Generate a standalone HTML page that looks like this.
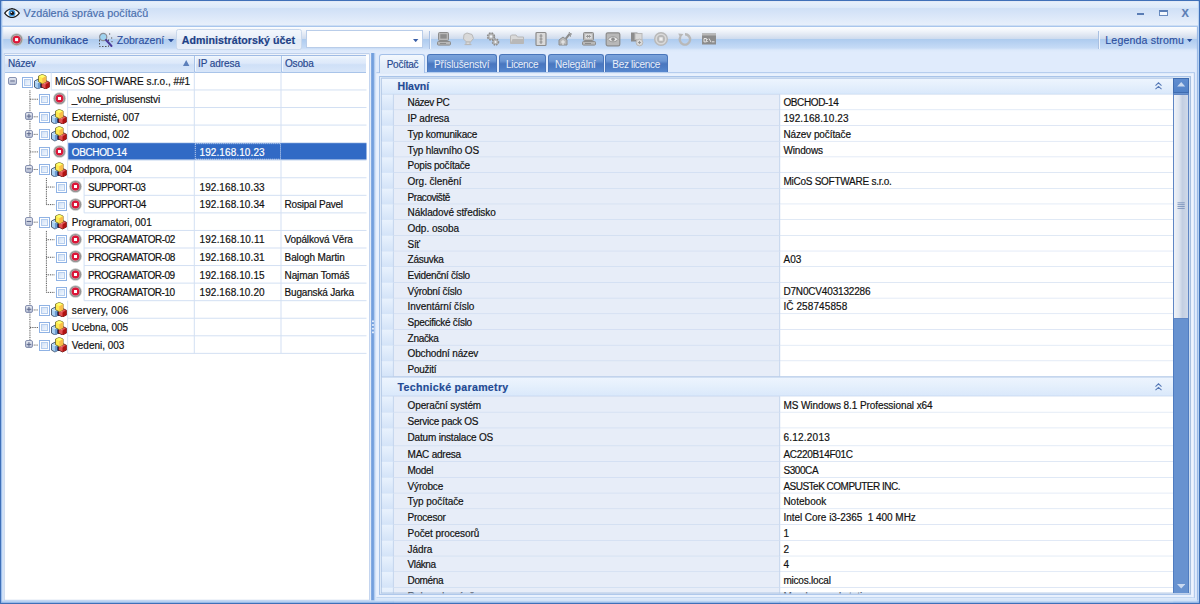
<!DOCTYPE html>
<html lang="cs"><head><meta charset="utf-8"><title>Vzdálená správa počítačů</title>
<style>
html,body{margin:0;padding:0;}
body{width:1200px;height:604px;overflow:hidden;position:relative;background:#e0ebfc;font-family:"Liberation Sans", sans-serif;}
div{position:absolute;}
.t{white-space:pre;-webkit-text-stroke:0.18px currentColor;}
</style></head><body>
<div style="left:0px;top:0px;width:1200px;height:27px;background:linear-gradient(#f4f8fd 0px,#f4f8fd 1.8px,#e5effb 2.4px,#dce9f9 7.5px,#cfe0f6 8.2px,#d6e4f8 13px,#e8f0fb 25.2px,#a9c6ec 25.9px,#a9c6ec 26.8px,#fcfdfe 27px);"></div>
<div style="left:2px;top:27px;width:1196px;height:25.5px;background:linear-gradient(#fcfdfe 0px,#f0f4fa 4px,#e0e7f2 8px,#cedbee 11.8px,#adcbee 12px,#b5d0f1 15px,#c6dbf6 21px,#dbe8fa 23px,#e0ebfc 25.5px);"></div>
<div style="left:2px;top:52.5px;width:1196px;height:549px;background:#e0ebfc;"></div>
<svg style="position:absolute;left:3.8px;top:7.6px" width="16" height="10.4" viewBox="0 0 16 10.4"><path d="M0.7 5.2 C3.4 1.4 6 0.9 8 0.9 C10 0.9 12.6 1.4 15.3 5.2 C12.6 9 10 9.5 8 9.5 C6 9.5 3.4 9 0.7 5.2Z" fill="#fff" stroke="#1c1c1c" stroke-width="1.2"/><circle cx="8" cy="5.2" r="3.4" fill="#3d96dc"/><circle cx="8.2" cy="5.2" r="1.9" fill="#1a1210"/><circle cx="7.4" cy="4.4" r="0.7" fill="#ddd"/><path d="M8 0 v1 M8 9.4 v1" stroke="#1c1c1c" stroke-width="1.4"/></svg>
<div class="t" style="left:23.5px;top:6.00px;height:14px;line-height:14px;font-size:10.8px;font-weight:400;color:#4a6fae;letter-spacing:0.019px;">Vzdálená správa počítačů</div>
<div style="left:1137px;top:13px;width:7px;height:1.6px;background:#5a7db5;"></div>
<div style="left:1159px;top:9.6px;width:8.6px;height:6.4px;border:1px solid #6a8cc0;border-top:2.4px solid #5a7db5;box-sizing:border-box;background:#f4f8fd;"></div>
<div class="t" style="left:1181.6px;top:5.90px;height:14px;line-height:14px;font-size:11px;font-weight:700;color:#5a7db5;letter-spacing:2.056px;">X</div>
<svg style="position:absolute;left:9.8px;top:33.0px" width="13.2" height="13.2" viewBox="0 0 26 26"><circle cx="13" cy="13" r="12.7" fill="#c4c4c4"/><circle cx="13" cy="13" r="11.2" fill="#8e8e8e"/><circle cx="13" cy="13" r="9.4" fill="#b9b4b4"/><circle cx="13" cy="13" r="7.8" fill="#dc1638"/><rect x="10" y="10" width="6" height="6" fill="#fff"/></svg>
<div class="t" style="left:27.5px;top:33.20px;height:14px;line-height:14px;font-size:10.6px;font-weight:400;color:#26499a;letter-spacing:0.250px;-webkit-text-stroke:0.22px #26499a;">Komunikace</div>
<svg style="position:absolute;left:98px;top:32px" width="16" height="16" viewBox="0 0 16 16"><rect x="1.5" y="7.5" width="9" height="7" fill="none" stroke="#555" stroke-width="1" stroke-dasharray="1.5 1.5"/><circle cx="5.2" cy="5" r="3.6" fill="#9fd3f0" stroke="#8a8f98" stroke-width="1.2"/><path d="M8 8 L13.5 14" stroke="#4a3a9a" stroke-width="2" stroke-linecap="round"/><path d="M11 2 h2 M13 6 h1.6 M14 9 v2" stroke="#555" stroke-width="1" stroke-dasharray="1.2 1.2"/></svg>
<div class="t" style="left:116.7px;top:33.20px;height:14px;line-height:14px;font-size:10.6px;font-weight:400;color:#2b4d9c;letter-spacing:-0.023px;-webkit-text-stroke:0.1px #2b4d9c;">Zobrazení</div>
<svg style="position:absolute;left:168.2px;top:38.6px" width="6" height="3.4" viewBox="0 0 6 3.4"><path d="M0 0h6L3 3.4z" fill="#2a4f9c"/></svg>
<div style="left:176.4px;top:28.6px;width:125.2px;height:21.6px;background:linear-gradient(#f3f7fc,#e9f0f9 45%,#e1eaf6 50%,#e8eff9);border:1px solid #c9d8ec;border-radius:2.5px;box-sizing:border-box;"></div>
<div class="t" style="left:181.7px;top:33.20px;height:14px;line-height:14px;font-size:10.6px;font-weight:700;color:#203f86;letter-spacing:0.069px;">Administrátorský účet</div>
<div style="left:306px;top:30px;width:116.6px;height:18.4px;background:#fff;border:1px solid #b9cde9;box-sizing:border-box;"></div>
<svg style="position:absolute;left:413.2px;top:38.8px" width="5.4" height="3.2" viewBox="0 0 6 3.4"><path d="M0 0h6L3 3.4z" fill="#3a5fa8"/></svg>
<div style="left:429px;top:30.5px;width:1px;height:18px;background:#a9c0e2;"></div>
<div style="left:430px;top:30.5px;width:1px;height:18px;background:#eef4fc;"></div>
<svg style="position:absolute;left:436px;top:30.9px" width="16" height="16" viewBox="0 0 16 16"><rect x="2.5" y="1.5" width="10" height="8" rx="1" fill="#b8b8b8" stroke="#8c8c8c"/><rect x="4.3" y="3.2" width="6.4" height="4.4" fill="#8c8c8c"/><rect x="1.5" y="10.5" width="13" height="3.6" rx="1" fill="#b8b8b8" stroke="#8c8c8c"/><rect x="4" y="12" width="6" height="1" fill="#8c8c8c"/></svg><svg style="position:absolute;left:460px;top:30.9px" width="16" height="16" viewBox="0 0 16 16"><path d="M4 3.5 l3 -1.5 l5 1.5 l1.5 4 l-3 3.5 h-4 l-3 -3z" fill="#d9d9d9" stroke="#b8b8b8"/><path d="M6 11 h4 v2.5 h-4z M4.5 13.6 h7" fill="#d9d9d9" stroke="#b8b8b8"/></svg><svg style="position:absolute;left:484.5px;top:30.9px" width="16" height="16" viewBox="0 0 16 16"><circle cx="6" cy="5.5" r="3.4" fill="#b8b8b8" stroke="#8c8c8c" stroke-dasharray="1.6 1.1" stroke-width="1.6"/><circle cx="6" cy="5.5" r="1.2" fill="#eef3fa"/><circle cx="10.5" cy="11" r="3" fill="#b8b8b8" stroke="#8c8c8c" stroke-dasharray="1.5 1" stroke-width="1.5"/><circle cx="10.5" cy="11" r="1" fill="#eef3fa"/></svg><svg style="position:absolute;left:508.70000000000005px;top:30.9px" width="16" height="16" viewBox="0 0 16 16"><path d="M1.5 5 v7.5 h13 v-6.5 h-6 l-1.5 -2 h-4.5z" fill="#d9d9d9" stroke="#b8b8b8"/><path d="M3.5 8 h11 v4.5 h-13z" fill="#b8b8b8"/></svg><svg style="position:absolute;left:533px;top:30.9px" width="16" height="16" viewBox="0 0 16 16"><rect x="3" y="1.5" width="10" height="13" rx="1" fill="#d9d9d9" stroke="#8c8c8c" stroke-width="1.2"/><path d="M8 3 v10 M6.5 5 h3 M6.5 8 h3 M6.5 11 h3" stroke="#8c8c8c" stroke-width="1"/></svg><svg style="position:absolute;left:556.5px;top:30.9px" width="16" height="16" viewBox="0 0 16 16"><path d="M2 14 v-5 l4 -3 l4 3 v5z" fill="#b8b8b8" stroke="#8c8c8c"/><path d="M4 11 h4 M6 9 v5" stroke="#eee" stroke-width="1"/><path d="M8 7 l4 -5 l1.5 1.5 l-4 5z" fill="#8c8c8c"/><path d="M12 1 l1 1.6 l1.6 0.4 l-1.4 1 l0.2 1.8" stroke="#8c8c8c" fill="none"/></svg><svg style="position:absolute;left:580.5px;top:30.9px" width="16" height="16" viewBox="0 0 16 16"><rect x="2.5" y="1.5" width="10" height="8" rx="1" fill="#b8b8b8" stroke="#8c8c8c"/><rect x="4.3" y="3.2" width="6.4" height="4.4" fill="#e4e4e4"/><path d="M5 5.4 h5 M6 4.2 l3 2.4 M9 4.2 l-3 2.4" stroke="#8c8c8c" stroke-width="0.9"/><rect x="1.5" y="10.5" width="13" height="3.6" rx="1" fill="#b8b8b8" stroke="#8c8c8c"/><rect x="4" y="12" width="6" height="1" fill="#8c8c8c"/></svg><svg style="position:absolute;left:604.5px;top:30.9px" width="16" height="16" viewBox="0 0 16 16"><rect x="1.2" y="1.8" width="13.6" height="13" rx="1.6" fill="#b8b8b8" stroke="#8c8c8c" stroke-width="1.2"/><path d="M3 8.3 C5 5 11 5 13 8.3 C11 11.6 5 11.6 3 8.3Z" fill="#e8e8e8" stroke="#8c8c8c" stroke-width="0.8"/><circle cx="8" cy="8.3" r="1.8" fill="#8c8c8c"/></svg><svg style="position:absolute;left:628.7px;top:30.9px" width="16" height="16" viewBox="0 0 16 16"><rect x="2" y="1.5" width="6.5" height="9" fill="#8c8c8c"/><rect x="6" y="2.5" width="7" height="6" fill="#d9d9d9" stroke="#b8b8b8"/><circle cx="10.5" cy="11.5" r="3.4" fill="#d9d9d9" stroke="#b8b8b8"/><path d="M9 11.5 h3 M10.5 10 v3" stroke="#8c8c8c" stroke-width="0.8"/></svg><svg style="position:absolute;left:653px;top:30.9px" width="16" height="16" viewBox="0 0 16 16"><circle cx="8" cy="8" r="6.3" fill="#d9d9d9" stroke="#b8b8b8" stroke-width="1.4"/><circle cx="8" cy="8" r="4" fill="#b8b8b8"/><rect x="6.3" y="6.3" width="3.4" height="3.4" fill="#f0f0f0"/></svg><svg style="position:absolute;left:677px;top:30.9px" width="16" height="16" viewBox="0 0 16 16"><path d="M8 3.2 A5.2 5.2 0 1 1 3.4 5.8" fill="none" stroke="#b8b8b8" stroke-width="2.4"/><path d="M1.2 2.4 l5.2 0.6 l-3 4z" fill="#b8b8b8"/></svg><svg style="position:absolute;left:700.7px;top:30.9px" width="16" height="16" viewBox="0 0 16 16"><rect x="1" y="2.5" width="14" height="11" fill="#8c8c8c"/><rect x="1" y="2.5" width="14" height="2" fill="#b8b8b8"/><path d="M3 7.5 h2.4 v3.4 h-2.4z M6.6 8 v0.8 M6.6 10 v0.8 M8 7.5 l2 3.6 M11 10.8 h2.5" stroke="#eee" stroke-width="0.9" fill="none"/></svg>
<div style="left:1098px;top:31px;width:1px;height:17.5px;background:#a9c0e2;"></div>
<div style="left:1099px;top:31px;width:1px;height:17.5px;background:#eef4fc;"></div>
<div class="t" style="left:1105.3px;top:33.20px;height:14px;line-height:14px;font-size:10.6px;font-weight:400;color:#2b4d9c;letter-spacing:0.153px;-webkit-text-stroke:0.1px #2b4d9c;">Legenda stromu</div>
<svg style="position:absolute;left:1187.4px;top:38.8px" width="5.4" height="3.2" viewBox="0 0 6 3.4"><path d="M0 0h6L3 3.4z" fill="#2a4f9c"/></svg>
<svg style="position:absolute;left:0;top:0" width="1200" height="604" viewBox="0 0 1200 604"><rect x="3.80" y="53.30" width="366.00" height="547.30" fill="#b1c6e6"/><rect x="4.60" y="54.20" width="364.40" height="545.60" fill="#ffffff"/></svg>
<div style="left:5px;top:55px;width:361.4px;height:17.5px;background:linear-gradient(#f2f7fd 0%,#e4eefb 20%,#dde9fa 45%,#cfe0f7 55%,#d8e6f9 100%);border-bottom:1px solid #a9c4e9;border-top:1px solid #9fbbe4;box-sizing:border-box;"></div>
<div style="left:193.8px;top:55.5px;width:1px;height:16.900000000000006px;background:#a9c4e9;"></div>
<div style="left:194.8px;top:55.5px;width:1px;height:15.900000000000006px;background:#f3f8fe;"></div>
<div style="left:280.5px;top:55.5px;width:1px;height:16.900000000000006px;background:#a9c4e9;"></div>
<div style="left:281.5px;top:55.5px;width:1px;height:15.900000000000006px;background:#f3f8fe;"></div>
<div class="t" style="left:8px;top:56.60px;height:14px;line-height:14px;font-size:10px;font-weight:400;color:#27488f;letter-spacing:-0.172px;">Název</div>
<div class="t" style="left:198px;top:56.60px;height:14px;line-height:14px;font-size:10px;font-weight:400;color:#27488f;letter-spacing:-0.069px;">IP adresa</div>
<div class="t" style="left:285px;top:56.60px;height:14px;line-height:14px;font-size:10px;font-weight:400;color:#27488f;letter-spacing:-0.194px;">Osoba</div>
<svg style="position:absolute;left:183.4px;top:60.4px" width="6.4" height="6" viewBox="0 0 6.4 6"><path d="M0 6h6.4L3.2 0z" fill="#5c7fba"/></svg>
<svg style="position:absolute;left:0;top:0" width="1200" height="604" viewBox="0 0 1200 604"><rect x="51.20" y="89.46" width="315.30" height="1.00" fill="#d3e0f3"/><rect x="50.70" y="72.40" width="1.00" height="17.56" fill="#d3e0f3"/><rect x="193.80" y="72.40" width="1.00" height="17.56" fill="#d3e0f3"/><rect x="280.50" y="72.40" width="1.00" height="17.56" fill="#d3e0f3"/><rect x="67.65" y="107.02" width="298.85" height="1.00" fill="#d3e0f3"/><rect x="67.15" y="89.96" width="1.00" height="17.56" fill="#d3e0f3"/><rect x="193.80" y="89.96" width="1.00" height="17.56" fill="#d3e0f3"/><rect x="280.50" y="89.96" width="1.00" height="17.56" fill="#d3e0f3"/><rect x="67.65" y="124.58" width="298.85" height="1.00" fill="#d3e0f3"/><rect x="67.15" y="107.52" width="1.00" height="17.56" fill="#d3e0f3"/><rect x="193.80" y="107.52" width="1.00" height="17.56" fill="#d3e0f3"/><rect x="280.50" y="107.52" width="1.00" height="17.56" fill="#d3e0f3"/><rect x="67.65" y="142.14" width="298.85" height="1.00" fill="#d3e0f3"/><rect x="67.15" y="125.08" width="1.00" height="17.56" fill="#d3e0f3"/><rect x="193.80" y="125.08" width="1.00" height="17.56" fill="#d3e0f3"/><rect x="280.50" y="125.08" width="1.00" height="17.56" fill="#d3e0f3"/><rect x="68.15" y="143.14" width="298.35" height="16.56" fill="#316ac5"/><rect x="67.65" y="159.70" width="298.85" height="1.00" fill="#d3e0f3"/><rect x="67.15" y="142.64" width="1.00" height="17.56" fill="#d3e0f3"/><rect x="67.65" y="177.26" width="298.85" height="1.00" fill="#d3e0f3"/><rect x="67.15" y="160.20" width="1.00" height="17.56" fill="#d3e0f3"/><rect x="193.80" y="160.20" width="1.00" height="17.56" fill="#d3e0f3"/><rect x="280.50" y="160.20" width="1.00" height="17.56" fill="#d3e0f3"/><rect x="84.10" y="194.82" width="282.40" height="1.00" fill="#d3e0f3"/><rect x="83.60" y="177.76" width="1.00" height="17.56" fill="#d3e0f3"/><rect x="193.80" y="177.76" width="1.00" height="17.56" fill="#d3e0f3"/><rect x="280.50" y="177.76" width="1.00" height="17.56" fill="#d3e0f3"/><rect x="84.10" y="212.38" width="282.40" height="1.00" fill="#d3e0f3"/><rect x="83.60" y="195.32" width="1.00" height="17.56" fill="#d3e0f3"/><rect x="193.80" y="195.32" width="1.00" height="17.56" fill="#d3e0f3"/><rect x="280.50" y="195.32" width="1.00" height="17.56" fill="#d3e0f3"/><rect x="67.65" y="229.94" width="298.85" height="1.00" fill="#d3e0f3"/><rect x="67.15" y="212.88" width="1.00" height="17.56" fill="#d3e0f3"/><rect x="193.80" y="212.88" width="1.00" height="17.56" fill="#d3e0f3"/><rect x="280.50" y="212.88" width="1.00" height="17.56" fill="#d3e0f3"/><rect x="84.10" y="247.50" width="282.40" height="1.00" fill="#d3e0f3"/><rect x="83.60" y="230.44" width="1.00" height="17.56" fill="#d3e0f3"/><rect x="193.80" y="230.44" width="1.00" height="17.56" fill="#d3e0f3"/><rect x="280.50" y="230.44" width="1.00" height="17.56" fill="#d3e0f3"/><rect x="84.10" y="265.06" width="282.40" height="1.00" fill="#d3e0f3"/><rect x="83.60" y="248.00" width="1.00" height="17.56" fill="#d3e0f3"/><rect x="193.80" y="248.00" width="1.00" height="17.56" fill="#d3e0f3"/><rect x="280.50" y="248.00" width="1.00" height="17.56" fill="#d3e0f3"/><rect x="84.10" y="282.62" width="282.40" height="1.00" fill="#d3e0f3"/><rect x="83.60" y="265.56" width="1.00" height="17.56" fill="#d3e0f3"/><rect x="193.80" y="265.56" width="1.00" height="17.56" fill="#d3e0f3"/><rect x="280.50" y="265.56" width="1.00" height="17.56" fill="#d3e0f3"/><rect x="84.10" y="300.18" width="282.40" height="1.00" fill="#d3e0f3"/><rect x="83.60" y="283.12" width="1.00" height="17.56" fill="#d3e0f3"/><rect x="193.80" y="283.12" width="1.00" height="17.56" fill="#d3e0f3"/><rect x="280.50" y="283.12" width="1.00" height="17.56" fill="#d3e0f3"/><rect x="67.65" y="317.74" width="298.85" height="1.00" fill="#d3e0f3"/><rect x="67.15" y="300.68" width="1.00" height="17.56" fill="#d3e0f3"/><rect x="193.80" y="300.68" width="1.00" height="17.56" fill="#d3e0f3"/><rect x="280.50" y="300.68" width="1.00" height="17.56" fill="#d3e0f3"/><rect x="67.65" y="335.30" width="298.85" height="1.00" fill="#d3e0f3"/><rect x="67.15" y="318.24" width="1.00" height="17.56" fill="#d3e0f3"/><rect x="193.80" y="318.24" width="1.00" height="17.56" fill="#d3e0f3"/><rect x="280.50" y="318.24" width="1.00" height="17.56" fill="#d3e0f3"/><rect x="67.65" y="352.86" width="298.85" height="1.00" fill="#d3e0f3"/><rect x="67.15" y="335.80" width="1.00" height="17.56" fill="#d3e0f3"/><rect x="193.80" y="335.80" width="1.00" height="17.56" fill="#d3e0f3"/><rect x="280.50" y="335.80" width="1.00" height="17.56" fill="#d3e0f3"/><line x1="29.95" y1="90.46" x2="29.95" y2="340.58" stroke="#444" stroke-width="1" stroke-dasharray="0.9 0.9"/><line x1="46.40" y1="178.26" x2="46.40" y2="204.60" stroke="#444" stroke-width="1" stroke-dasharray="0.9 0.9"/><line x1="46.40" y1="230.94" x2="46.40" y2="292.40" stroke="#444" stroke-width="1" stroke-dasharray="0.9 0.9"/><line x1="29.95" y1="99.24" x2="37.95" y2="99.24" stroke="#444" stroke-width="1" stroke-dasharray="0.9 0.9"/><line x1="33.75" y1="116.80" x2="37.95" y2="116.80" stroke="#444" stroke-width="1" stroke-dasharray="0.9 0.9"/><line x1="33.75" y1="134.36" x2="37.95" y2="134.36" stroke="#444" stroke-width="1" stroke-dasharray="0.9 0.9"/><line x1="29.95" y1="151.92" x2="37.95" y2="151.92" stroke="#444" stroke-width="1" stroke-dasharray="0.9 0.9"/><line x1="33.75" y1="169.48" x2="37.95" y2="169.48" stroke="#444" stroke-width="1" stroke-dasharray="0.9 0.9"/><line x1="46.40" y1="187.04" x2="54.40" y2="187.04" stroke="#444" stroke-width="1" stroke-dasharray="0.9 0.9"/><line x1="46.40" y1="204.60" x2="54.40" y2="204.60" stroke="#444" stroke-width="1" stroke-dasharray="0.9 0.9"/><line x1="33.75" y1="222.16" x2="37.95" y2="222.16" stroke="#444" stroke-width="1" stroke-dasharray="0.9 0.9"/><line x1="46.40" y1="239.72" x2="54.40" y2="239.72" stroke="#444" stroke-width="1" stroke-dasharray="0.9 0.9"/><line x1="46.40" y1="257.28" x2="54.40" y2="257.28" stroke="#444" stroke-width="1" stroke-dasharray="0.9 0.9"/><line x1="46.40" y1="274.84" x2="54.40" y2="274.84" stroke="#444" stroke-width="1" stroke-dasharray="0.9 0.9"/><line x1="46.40" y1="292.40" x2="54.40" y2="292.40" stroke="#444" stroke-width="1" stroke-dasharray="0.9 0.9"/><line x1="33.75" y1="309.96" x2="37.95" y2="309.96" stroke="#444" stroke-width="1" stroke-dasharray="0.9 0.9"/><line x1="29.95" y1="327.52" x2="37.95" y2="327.52" stroke="#444" stroke-width="1" stroke-dasharray="0.9 0.9"/><line x1="33.75" y1="345.08" x2="37.95" y2="345.08" stroke="#444" stroke-width="1" stroke-dasharray="0.9 0.9"/></svg>
<div class="t" style="left:55.0px;top:75.38px;height:14px;line-height:14px;font-size:10px;font-weight:400;color:#111;letter-spacing:-0.030px;">MiCoS SOFTWARE s.r.o., ##1</div>
<div style="left:22.2px;top:76.58000000000001px;width:11px;height:11px;border:1px solid #8fb2e4;background:#fff;box-sizing:border-box;"></div>
<div style="left:24.2px;top:78.58000000000001px;width:7px;height:7px;border:1px solid #b4cdef;background:linear-gradient(135deg,#d3e2f6,#f2f7fd);box-sizing:border-box;"></div>
<svg style="position:absolute;left:34.0px;top:73.80000000000001px" width="16" height="15.4" viewBox="0 0 16 15.4">
<path d="M3.9 5.3 L7.5 7 V13.1 L3.9 15 L0.5 13.1 V7Z" fill="#a9d0f1" stroke="#2c3c58" stroke-width="0.8" stroke-linejoin="round"/><path d="M3.9 9 L7.5 7 V13.1 L3.9 15Z" fill="#6d9ccf"/><path d="M0.9 7.2 L3.9 8.8 L7.1 7.2" fill="none" stroke="#e4f1fc" stroke-width="0.7"/>
<path d="M6.3 9.5 L8.6 9.5 L8.6 13.4 L7.4 14 L6.3 13.2Z" fill="#161b42"/>
<path d="M11.5 6.4 L15.4 8.2 V13.1 L11.5 15 L7.6 13.1 V8.2Z" fill="#e15252" stroke="#5c1414" stroke-width="0.8" stroke-linejoin="round"/><path d="M11.5 10.2 L15.4 8.2 V13.1 L11.5 15Z" fill="#b01212"/><path d="M8 8.5 L11.5 10.1" fill="none" stroke="#f59a9a" stroke-width="0.7"/>
<path d="M8.3 0.4 L12.1 2.1 V7.7 L8.3 9.7 L4.5 7.7 V2.1Z" fill="#ffe94e" stroke="#6a6420" stroke-width="0.8" stroke-linejoin="round"/><path d="M8.3 4 L12.1 2.1 V7.7 L8.3 9.7Z" fill="#f9bd48"/><path d="M8.3 0.8 L11.7 2.2 L8.3 3.9 L4.9 2.2Z" fill="#ffff6a"/>
</svg>
<div style="left:8.3px;top:76.88000000000001px;width:8.4px;height:8.2px;border:1px solid #8791b0;border-radius:2px;background:linear-gradient(#e6e9f1,#b4bcd2);box-sizing:border-box;"></div>
<svg style="position:absolute;left:0;top:0" width="1200" height="604" viewBox="0 0 1200 604"><rect x="10.20" y="80.48" width="4.60" height="1.00" fill="#5d688c"/></svg>
<div class="t" style="left:71.75px;top:92.94px;height:14px;line-height:14px;font-size:10px;font-weight:400;color:#111;letter-spacing:-0.088px;">_volne_prislusenstvi</div>
<div style="left:39.05px;top:94.14000000000001px;width:11px;height:11px;border:1px solid #8fb2e4;background:#fff;box-sizing:border-box;"></div>
<div style="left:41.05px;top:96.14000000000001px;width:7px;height:7px;border:1px solid #b4cdef;background:linear-gradient(135deg,#d3e2f6,#f2f7fd);box-sizing:border-box;"></div>
<svg style="position:absolute;left:52.6px;top:92.24000000000001px" width="13" height="13" viewBox="0 0 26 26"><circle cx="13" cy="13" r="12.7" fill="#c4c4c4"/><circle cx="13" cy="13" r="11.2" fill="#8e8e8e"/><circle cx="13" cy="13" r="9.4" fill="#b9b4b4"/><circle cx="13" cy="13" r="7.8" fill="#dc1638"/><rect x="10" y="10" width="6" height="6" fill="#fff"/></svg>
<div class="t" style="left:71.75px;top:110.50px;height:14px;line-height:14px;font-size:10px;font-weight:400;color:#111;letter-spacing:0.085px;">Externisté, 007</div>
<div style="left:39.05px;top:111.70000000000002px;width:11px;height:11px;border:1px solid #8fb2e4;background:#fff;box-sizing:border-box;"></div>
<div style="left:41.05px;top:113.70000000000002px;width:7px;height:7px;border:1px solid #b4cdef;background:linear-gradient(135deg,#d3e2f6,#f2f7fd);box-sizing:border-box;"></div>
<svg style="position:absolute;left:50.75px;top:108.92000000000002px" width="16" height="15.4" viewBox="0 0 16 15.4">
<path d="M3.9 5.3 L7.5 7 V13.1 L3.9 15 L0.5 13.1 V7Z" fill="#a9d0f1" stroke="#2c3c58" stroke-width="0.8" stroke-linejoin="round"/><path d="M3.9 9 L7.5 7 V13.1 L3.9 15Z" fill="#6d9ccf"/><path d="M0.9 7.2 L3.9 8.8 L7.1 7.2" fill="none" stroke="#e4f1fc" stroke-width="0.7"/>
<path d="M6.3 9.5 L8.6 9.5 L8.6 13.4 L7.4 14 L6.3 13.2Z" fill="#161b42"/>
<path d="M11.5 6.4 L15.4 8.2 V13.1 L11.5 15 L7.6 13.1 V8.2Z" fill="#e15252" stroke="#5c1414" stroke-width="0.8" stroke-linejoin="round"/><path d="M11.5 10.2 L15.4 8.2 V13.1 L11.5 15Z" fill="#b01212"/><path d="M8 8.5 L11.5 10.1" fill="none" stroke="#f59a9a" stroke-width="0.7"/>
<path d="M8.3 0.4 L12.1 2.1 V7.7 L8.3 9.7 L4.5 7.7 V2.1Z" fill="#ffe94e" stroke="#6a6420" stroke-width="0.8" stroke-linejoin="round"/><path d="M8.3 4 L12.1 2.1 V7.7 L8.3 9.7Z" fill="#f9bd48"/><path d="M8.3 0.8 L11.7 2.2 L8.3 3.9 L4.9 2.2Z" fill="#ffff6a"/>
</svg>
<div style="left:24.75px;top:112.00000000000001px;width:8.4px;height:8.2px;border:1px solid #8791b0;border-radius:2px;background:linear-gradient(#e6e9f1,#b4bcd2);box-sizing:border-box;"></div>
<svg style="position:absolute;left:0;top:0" width="1200" height="604" viewBox="0 0 1200 604"><rect x="26.65" y="115.60" width="4.60" height="1.00" fill="#5d688c"/><rect x="28.45" y="113.80" width="1.00" height="4.60" fill="#5d688c"/></svg>
<div class="t" style="left:71.75px;top:128.06px;height:14px;line-height:14px;font-size:10px;font-weight:400;color:#111;letter-spacing:0.021px;">Obchod, 002</div>
<div style="left:39.05px;top:129.26px;width:11px;height:11px;border:1px solid #8fb2e4;background:#fff;box-sizing:border-box;"></div>
<div style="left:41.05px;top:131.26px;width:7px;height:7px;border:1px solid #b4cdef;background:linear-gradient(135deg,#d3e2f6,#f2f7fd);box-sizing:border-box;"></div>
<svg style="position:absolute;left:50.75px;top:126.48px" width="16" height="15.4" viewBox="0 0 16 15.4">
<path d="M3.9 5.3 L7.5 7 V13.1 L3.9 15 L0.5 13.1 V7Z" fill="#a9d0f1" stroke="#2c3c58" stroke-width="0.8" stroke-linejoin="round"/><path d="M3.9 9 L7.5 7 V13.1 L3.9 15Z" fill="#6d9ccf"/><path d="M0.9 7.2 L3.9 8.8 L7.1 7.2" fill="none" stroke="#e4f1fc" stroke-width="0.7"/>
<path d="M6.3 9.5 L8.6 9.5 L8.6 13.4 L7.4 14 L6.3 13.2Z" fill="#161b42"/>
<path d="M11.5 6.4 L15.4 8.2 V13.1 L11.5 15 L7.6 13.1 V8.2Z" fill="#e15252" stroke="#5c1414" stroke-width="0.8" stroke-linejoin="round"/><path d="M11.5 10.2 L15.4 8.2 V13.1 L11.5 15Z" fill="#b01212"/><path d="M8 8.5 L11.5 10.1" fill="none" stroke="#f59a9a" stroke-width="0.7"/>
<path d="M8.3 0.4 L12.1 2.1 V7.7 L8.3 9.7 L4.5 7.7 V2.1Z" fill="#ffe94e" stroke="#6a6420" stroke-width="0.8" stroke-linejoin="round"/><path d="M8.3 4 L12.1 2.1 V7.7 L8.3 9.7Z" fill="#f9bd48"/><path d="M8.3 0.8 L11.7 2.2 L8.3 3.9 L4.9 2.2Z" fill="#ffff6a"/>
</svg>
<div style="left:24.75px;top:129.56px;width:8.4px;height:8.2px;border:1px solid #8791b0;border-radius:2px;background:linear-gradient(#e6e9f1,#b4bcd2);box-sizing:border-box;"></div>
<svg style="position:absolute;left:0;top:0" width="1200" height="604" viewBox="0 0 1200 604"><rect x="26.65" y="133.16" width="4.60" height="1.00" fill="#5d688c"/><rect x="28.45" y="131.36" width="1.00" height="4.60" fill="#5d688c"/><rect x="195.30" y="143.64" width="85.20" height="15.56" fill="none" stroke="#e8eefa" stroke-width="0.9" stroke-dasharray="1 1"/></svg>
<div class="t" style="left:71.75px;top:145.62px;height:14px;line-height:14px;font-size:10px;font-weight:400;color:#fff;letter-spacing:-0.373px;">OBCHOD-14</div>
<div class="t" style="left:199.5px;top:145.62px;height:14px;line-height:14px;font-size:10px;font-weight:400;color:#fff;letter-spacing:0.096px;">192.168.10.23</div>
<div style="left:39.05px;top:146.82px;width:11px;height:11px;border:1px solid #8fb2e4;background:#fff;box-sizing:border-box;"></div>
<div style="left:41.05px;top:148.82px;width:7px;height:7px;border:1px solid #b4cdef;background:linear-gradient(135deg,#d3e2f6,#f2f7fd);box-sizing:border-box;"></div>
<svg style="position:absolute;left:52.6px;top:144.92px" width="13" height="13" viewBox="0 0 26 26"><circle cx="13" cy="13" r="12.7" fill="#c4c4c4"/><circle cx="13" cy="13" r="11.2" fill="#8e8e8e"/><circle cx="13" cy="13" r="9.4" fill="#b9b4b4"/><circle cx="13" cy="13" r="7.8" fill="#dc1638"/><rect x="10" y="10" width="6" height="6" fill="#fff"/></svg>
<div class="t" style="left:71.75px;top:163.18px;height:14px;line-height:14px;font-size:10px;font-weight:400;color:#111;letter-spacing:-0.005px;">Podpora, 004</div>
<div style="left:39.05px;top:164.38px;width:11px;height:11px;border:1px solid #8fb2e4;background:#fff;box-sizing:border-box;"></div>
<div style="left:41.05px;top:166.38px;width:7px;height:7px;border:1px solid #b4cdef;background:linear-gradient(135deg,#d3e2f6,#f2f7fd);box-sizing:border-box;"></div>
<svg style="position:absolute;left:50.75px;top:161.6px" width="16" height="15.4" viewBox="0 0 16 15.4">
<path d="M3.9 5.3 L7.5 7 V13.1 L3.9 15 L0.5 13.1 V7Z" fill="#a9d0f1" stroke="#2c3c58" stroke-width="0.8" stroke-linejoin="round"/><path d="M3.9 9 L7.5 7 V13.1 L3.9 15Z" fill="#6d9ccf"/><path d="M0.9 7.2 L3.9 8.8 L7.1 7.2" fill="none" stroke="#e4f1fc" stroke-width="0.7"/>
<path d="M6.3 9.5 L8.6 9.5 L8.6 13.4 L7.4 14 L6.3 13.2Z" fill="#161b42"/>
<path d="M11.5 6.4 L15.4 8.2 V13.1 L11.5 15 L7.6 13.1 V8.2Z" fill="#e15252" stroke="#5c1414" stroke-width="0.8" stroke-linejoin="round"/><path d="M11.5 10.2 L15.4 8.2 V13.1 L11.5 15Z" fill="#b01212"/><path d="M8 8.5 L11.5 10.1" fill="none" stroke="#f59a9a" stroke-width="0.7"/>
<path d="M8.3 0.4 L12.1 2.1 V7.7 L8.3 9.7 L4.5 7.7 V2.1Z" fill="#ffe94e" stroke="#6a6420" stroke-width="0.8" stroke-linejoin="round"/><path d="M8.3 4 L12.1 2.1 V7.7 L8.3 9.7Z" fill="#f9bd48"/><path d="M8.3 0.8 L11.7 2.2 L8.3 3.9 L4.9 2.2Z" fill="#ffff6a"/>
</svg>
<div style="left:24.75px;top:164.68px;width:8.4px;height:8.2px;border:1px solid #8791b0;border-radius:2px;background:linear-gradient(#e6e9f1,#b4bcd2);box-sizing:border-box;"></div>
<svg style="position:absolute;left:0;top:0" width="1200" height="604" viewBox="0 0 1200 604"><rect x="26.65" y="168.28" width="4.60" height="1.00" fill="#5d688c"/></svg>
<div class="t" style="left:88.0px;top:180.74px;height:14px;line-height:14px;font-size:10px;font-weight:400;color:#111;letter-spacing:-0.476px;">SUPPORT-03</div>
<div class="t" style="left:199.5px;top:180.74px;height:14px;line-height:14px;font-size:10px;font-weight:400;color:#111;letter-spacing:0.096px;">192.168.10.33</div>
<div style="left:55.5px;top:181.94px;width:11px;height:11px;border:1px solid #8fb2e4;background:#fff;box-sizing:border-box;"></div>
<div style="left:57.5px;top:183.94px;width:7px;height:7px;border:1px solid #b4cdef;background:linear-gradient(135deg,#d3e2f6,#f2f7fd);box-sizing:border-box;"></div>
<svg style="position:absolute;left:69.05px;top:180.04px" width="13" height="13" viewBox="0 0 26 26"><circle cx="13" cy="13" r="12.7" fill="#c4c4c4"/><circle cx="13" cy="13" r="11.2" fill="#8e8e8e"/><circle cx="13" cy="13" r="9.4" fill="#b9b4b4"/><circle cx="13" cy="13" r="7.8" fill="#dc1638"/><rect x="10" y="10" width="6" height="6" fill="#fff"/></svg>
<div class="t" style="left:88.0px;top:198.30px;height:14px;line-height:14px;font-size:10px;font-weight:400;color:#111;letter-spacing:-0.426px;">SUPPORT-04</div>
<div class="t" style="left:199.5px;top:198.30px;height:14px;line-height:14px;font-size:10px;font-weight:400;color:#111;letter-spacing:0.096px;">192.168.10.34</div>
<div class="t" style="left:284.6px;top:198.30px;height:14px;line-height:14px;font-size:10px;font-weight:400;color:#111;letter-spacing:-0.220px;">Rosipal Pavel</div>
<div style="left:55.5px;top:199.5px;width:11px;height:11px;border:1px solid #8fb2e4;background:#fff;box-sizing:border-box;"></div>
<div style="left:57.5px;top:201.5px;width:7px;height:7px;border:1px solid #b4cdef;background:linear-gradient(135deg,#d3e2f6,#f2f7fd);box-sizing:border-box;"></div>
<svg style="position:absolute;left:69.05px;top:197.6px" width="13" height="13" viewBox="0 0 26 26"><circle cx="13" cy="13" r="12.7" fill="#c4c4c4"/><circle cx="13" cy="13" r="11.2" fill="#8e8e8e"/><circle cx="13" cy="13" r="9.4" fill="#b9b4b4"/><circle cx="13" cy="13" r="7.8" fill="#dc1638"/><rect x="10" y="10" width="6" height="6" fill="#fff"/></svg>
<div class="t" style="left:71.75px;top:215.86px;height:14px;line-height:14px;font-size:10px;font-weight:400;color:#111;letter-spacing:-0.003px;">Programatori, 001</div>
<div style="left:39.05px;top:217.06px;width:11px;height:11px;border:1px solid #8fb2e4;background:#fff;box-sizing:border-box;"></div>
<div style="left:41.05px;top:219.06px;width:7px;height:7px;border:1px solid #b4cdef;background:linear-gradient(135deg,#d3e2f6,#f2f7fd);box-sizing:border-box;"></div>
<svg style="position:absolute;left:50.75px;top:214.28px" width="16" height="15.4" viewBox="0 0 16 15.4">
<path d="M3.9 5.3 L7.5 7 V13.1 L3.9 15 L0.5 13.1 V7Z" fill="#a9d0f1" stroke="#2c3c58" stroke-width="0.8" stroke-linejoin="round"/><path d="M3.9 9 L7.5 7 V13.1 L3.9 15Z" fill="#6d9ccf"/><path d="M0.9 7.2 L3.9 8.8 L7.1 7.2" fill="none" stroke="#e4f1fc" stroke-width="0.7"/>
<path d="M6.3 9.5 L8.6 9.5 L8.6 13.4 L7.4 14 L6.3 13.2Z" fill="#161b42"/>
<path d="M11.5 6.4 L15.4 8.2 V13.1 L11.5 15 L7.6 13.1 V8.2Z" fill="#e15252" stroke="#5c1414" stroke-width="0.8" stroke-linejoin="round"/><path d="M11.5 10.2 L15.4 8.2 V13.1 L11.5 15Z" fill="#b01212"/><path d="M8 8.5 L11.5 10.1" fill="none" stroke="#f59a9a" stroke-width="0.7"/>
<path d="M8.3 0.4 L12.1 2.1 V7.7 L8.3 9.7 L4.5 7.7 V2.1Z" fill="#ffe94e" stroke="#6a6420" stroke-width="0.8" stroke-linejoin="round"/><path d="M8.3 4 L12.1 2.1 V7.7 L8.3 9.7Z" fill="#f9bd48"/><path d="M8.3 0.8 L11.7 2.2 L8.3 3.9 L4.9 2.2Z" fill="#ffff6a"/>
</svg>
<div style="left:24.75px;top:217.36px;width:8.4px;height:8.2px;border:1px solid #8791b0;border-radius:2px;background:linear-gradient(#e6e9f1,#b4bcd2);box-sizing:border-box;"></div>
<svg style="position:absolute;left:0;top:0" width="1200" height="604" viewBox="0 0 1200 604"><rect x="26.65" y="220.96" width="4.60" height="1.00" fill="#5d688c"/></svg>
<div class="t" style="left:88.0px;top:233.42px;height:14px;line-height:14px;font-size:10px;font-weight:400;color:#111;letter-spacing:-0.427px;">PROGRAMATOR-02</div>
<div class="t" style="left:199.5px;top:233.42px;height:14px;line-height:14px;font-size:10px;font-weight:400;color:#111;letter-spacing:0.152px;">192.168.10.11</div>
<div class="t" style="left:284.6px;top:233.42px;height:14px;line-height:14px;font-size:10px;font-weight:400;color:#111;letter-spacing:-0.133px;">Vopálková Věra</div>
<div style="left:55.5px;top:234.62px;width:11px;height:11px;border:1px solid #8fb2e4;background:#fff;box-sizing:border-box;"></div>
<div style="left:57.5px;top:236.62px;width:7px;height:7px;border:1px solid #b4cdef;background:linear-gradient(135deg,#d3e2f6,#f2f7fd);box-sizing:border-box;"></div>
<svg style="position:absolute;left:69.05px;top:232.72px" width="13" height="13" viewBox="0 0 26 26"><circle cx="13" cy="13" r="12.7" fill="#c4c4c4"/><circle cx="13" cy="13" r="11.2" fill="#8e8e8e"/><circle cx="13" cy="13" r="9.4" fill="#b9b4b4"/><circle cx="13" cy="13" r="7.8" fill="#dc1638"/><rect x="10" y="10" width="6" height="6" fill="#fff"/></svg>
<div class="t" style="left:88.0px;top:250.98px;height:14px;line-height:14px;font-size:10px;font-weight:400;color:#111;letter-spacing:-0.427px;">PROGRAMATOR-08</div>
<div class="t" style="left:199.5px;top:250.98px;height:14px;line-height:14px;font-size:10px;font-weight:400;color:#111;letter-spacing:0.096px;">192.168.10.31</div>
<div class="t" style="left:284.6px;top:250.98px;height:14px;line-height:14px;font-size:10px;font-weight:400;color:#111;letter-spacing:-0.131px;">Balogh Martin</div>
<div style="left:55.5px;top:252.17999999999998px;width:11px;height:11px;border:1px solid #8fb2e4;background:#fff;box-sizing:border-box;"></div>
<div style="left:57.5px;top:254.17999999999998px;width:7px;height:7px;border:1px solid #b4cdef;background:linear-gradient(135deg,#d3e2f6,#f2f7fd);box-sizing:border-box;"></div>
<svg style="position:absolute;left:69.05px;top:250.27999999999997px" width="13" height="13" viewBox="0 0 26 26"><circle cx="13" cy="13" r="12.7" fill="#c4c4c4"/><circle cx="13" cy="13" r="11.2" fill="#8e8e8e"/><circle cx="13" cy="13" r="9.4" fill="#b9b4b4"/><circle cx="13" cy="13" r="7.8" fill="#dc1638"/><rect x="10" y="10" width="6" height="6" fill="#fff"/></svg>
<div class="t" style="left:88.0px;top:268.54px;height:14px;line-height:14px;font-size:10px;font-weight:400;color:#111;letter-spacing:-0.449px;">PROGRAMATOR-09</div>
<div class="t" style="left:199.5px;top:268.54px;height:14px;line-height:14px;font-size:10px;font-weight:400;color:#111;letter-spacing:0.096px;">192.168.10.15</div>
<div class="t" style="left:284.6px;top:268.54px;height:14px;line-height:14px;font-size:10px;font-weight:400;color:#111;letter-spacing:-0.135px;">Najman Tomáš</div>
<div style="left:55.5px;top:269.74px;width:11px;height:11px;border:1px solid #8fb2e4;background:#fff;box-sizing:border-box;"></div>
<div style="left:57.5px;top:271.74px;width:7px;height:7px;border:1px solid #b4cdef;background:linear-gradient(135deg,#d3e2f6,#f2f7fd);box-sizing:border-box;"></div>
<svg style="position:absolute;left:69.05px;top:267.84000000000003px" width="13" height="13" viewBox="0 0 26 26"><circle cx="13" cy="13" r="12.7" fill="#c4c4c4"/><circle cx="13" cy="13" r="11.2" fill="#8e8e8e"/><circle cx="13" cy="13" r="9.4" fill="#b9b4b4"/><circle cx="13" cy="13" r="7.8" fill="#dc1638"/><rect x="10" y="10" width="6" height="6" fill="#fff"/></svg>
<div class="t" style="left:88.0px;top:286.10px;height:14px;line-height:14px;font-size:10px;font-weight:400;color:#111;letter-spacing:-0.449px;">PROGRAMATOR-10</div>
<div class="t" style="left:199.5px;top:286.10px;height:14px;line-height:14px;font-size:10px;font-weight:400;color:#111;letter-spacing:0.096px;">192.168.10.20</div>
<div class="t" style="left:284.6px;top:286.10px;height:14px;line-height:14px;font-size:10px;font-weight:400;color:#111;letter-spacing:-0.180px;">Buganská Jarka</div>
<div style="left:55.5px;top:287.29999999999995px;width:11px;height:11px;border:1px solid #8fb2e4;background:#fff;box-sizing:border-box;"></div>
<div style="left:57.5px;top:289.29999999999995px;width:7px;height:7px;border:1px solid #b4cdef;background:linear-gradient(135deg,#d3e2f6,#f2f7fd);box-sizing:border-box;"></div>
<svg style="position:absolute;left:69.05px;top:285.4px" width="13" height="13" viewBox="0 0 26 26"><circle cx="13" cy="13" r="12.7" fill="#c4c4c4"/><circle cx="13" cy="13" r="11.2" fill="#8e8e8e"/><circle cx="13" cy="13" r="9.4" fill="#b9b4b4"/><circle cx="13" cy="13" r="7.8" fill="#dc1638"/><rect x="10" y="10" width="6" height="6" fill="#fff"/></svg>
<div class="t" style="left:71.75px;top:303.66px;height:14px;line-height:14px;font-size:10px;font-weight:400;color:#111;letter-spacing:0.225px;">servery, 006</div>
<div style="left:39.05px;top:304.8599999999999px;width:11px;height:11px;border:1px solid #8fb2e4;background:#fff;box-sizing:border-box;"></div>
<div style="left:41.05px;top:306.8599999999999px;width:7px;height:7px;border:1px solid #b4cdef;background:linear-gradient(135deg,#d3e2f6,#f2f7fd);box-sizing:border-box;"></div>
<svg style="position:absolute;left:50.75px;top:302.0799999999999px" width="16" height="15.4" viewBox="0 0 16 15.4">
<path d="M3.9 5.3 L7.5 7 V13.1 L3.9 15 L0.5 13.1 V7Z" fill="#a9d0f1" stroke="#2c3c58" stroke-width="0.8" stroke-linejoin="round"/><path d="M3.9 9 L7.5 7 V13.1 L3.9 15Z" fill="#6d9ccf"/><path d="M0.9 7.2 L3.9 8.8 L7.1 7.2" fill="none" stroke="#e4f1fc" stroke-width="0.7"/>
<path d="M6.3 9.5 L8.6 9.5 L8.6 13.4 L7.4 14 L6.3 13.2Z" fill="#161b42"/>
<path d="M11.5 6.4 L15.4 8.2 V13.1 L11.5 15 L7.6 13.1 V8.2Z" fill="#e15252" stroke="#5c1414" stroke-width="0.8" stroke-linejoin="round"/><path d="M11.5 10.2 L15.4 8.2 V13.1 L11.5 15Z" fill="#b01212"/><path d="M8 8.5 L11.5 10.1" fill="none" stroke="#f59a9a" stroke-width="0.7"/>
<path d="M8.3 0.4 L12.1 2.1 V7.7 L8.3 9.7 L4.5 7.7 V2.1Z" fill="#ffe94e" stroke="#6a6420" stroke-width="0.8" stroke-linejoin="round"/><path d="M8.3 4 L12.1 2.1 V7.7 L8.3 9.7Z" fill="#f9bd48"/><path d="M8.3 0.8 L11.7 2.2 L8.3 3.9 L4.9 2.2Z" fill="#ffff6a"/>
</svg>
<div style="left:24.75px;top:305.1599999999999px;width:8.4px;height:8.2px;border:1px solid #8791b0;border-radius:2px;background:linear-gradient(#e6e9f1,#b4bcd2);box-sizing:border-box;"></div>
<svg style="position:absolute;left:0;top:0" width="1200" height="604" viewBox="0 0 1200 604"><rect x="26.65" y="308.76" width="4.60" height="1.00" fill="#5d688c"/><rect x="28.45" y="306.96" width="1.00" height="4.60" fill="#5d688c"/></svg>
<div class="t" style="left:71.75px;top:321.22px;height:14px;line-height:14px;font-size:10px;font-weight:400;color:#111;letter-spacing:-0.038px;">Ucebna, 005</div>
<div style="left:39.05px;top:322.41999999999996px;width:11px;height:11px;border:1px solid #8fb2e4;background:#fff;box-sizing:border-box;"></div>
<div style="left:41.05px;top:324.41999999999996px;width:7px;height:7px;border:1px solid #b4cdef;background:linear-gradient(135deg,#d3e2f6,#f2f7fd);box-sizing:border-box;"></div>
<svg style="position:absolute;left:50.75px;top:319.64px" width="16" height="15.4" viewBox="0 0 16 15.4">
<path d="M3.9 5.3 L7.5 7 V13.1 L3.9 15 L0.5 13.1 V7Z" fill="#a9d0f1" stroke="#2c3c58" stroke-width="0.8" stroke-linejoin="round"/><path d="M3.9 9 L7.5 7 V13.1 L3.9 15Z" fill="#6d9ccf"/><path d="M0.9 7.2 L3.9 8.8 L7.1 7.2" fill="none" stroke="#e4f1fc" stroke-width="0.7"/>
<path d="M6.3 9.5 L8.6 9.5 L8.6 13.4 L7.4 14 L6.3 13.2Z" fill="#161b42"/>
<path d="M11.5 6.4 L15.4 8.2 V13.1 L11.5 15 L7.6 13.1 V8.2Z" fill="#e15252" stroke="#5c1414" stroke-width="0.8" stroke-linejoin="round"/><path d="M11.5 10.2 L15.4 8.2 V13.1 L11.5 15Z" fill="#b01212"/><path d="M8 8.5 L11.5 10.1" fill="none" stroke="#f59a9a" stroke-width="0.7"/>
<path d="M8.3 0.4 L12.1 2.1 V7.7 L8.3 9.7 L4.5 7.7 V2.1Z" fill="#ffe94e" stroke="#6a6420" stroke-width="0.8" stroke-linejoin="round"/><path d="M8.3 4 L12.1 2.1 V7.7 L8.3 9.7Z" fill="#f9bd48"/><path d="M8.3 0.8 L11.7 2.2 L8.3 3.9 L4.9 2.2Z" fill="#ffff6a"/>
</svg>
<div class="t" style="left:71.75px;top:338.78px;height:14px;line-height:14px;font-size:10px;font-weight:400;color:#111;letter-spacing:-0.030px;">Vedeni, 003</div>
<div style="left:39.05px;top:339.9799999999999px;width:11px;height:11px;border:1px solid #8fb2e4;background:#fff;box-sizing:border-box;"></div>
<div style="left:41.05px;top:341.9799999999999px;width:7px;height:7px;border:1px solid #b4cdef;background:linear-gradient(135deg,#d3e2f6,#f2f7fd);box-sizing:border-box;"></div>
<svg style="position:absolute;left:50.75px;top:337.19999999999993px" width="16" height="15.4" viewBox="0 0 16 15.4">
<path d="M3.9 5.3 L7.5 7 V13.1 L3.9 15 L0.5 13.1 V7Z" fill="#a9d0f1" stroke="#2c3c58" stroke-width="0.8" stroke-linejoin="round"/><path d="M3.9 9 L7.5 7 V13.1 L3.9 15Z" fill="#6d9ccf"/><path d="M0.9 7.2 L3.9 8.8 L7.1 7.2" fill="none" stroke="#e4f1fc" stroke-width="0.7"/>
<path d="M6.3 9.5 L8.6 9.5 L8.6 13.4 L7.4 14 L6.3 13.2Z" fill="#161b42"/>
<path d="M11.5 6.4 L15.4 8.2 V13.1 L11.5 15 L7.6 13.1 V8.2Z" fill="#e15252" stroke="#5c1414" stroke-width="0.8" stroke-linejoin="round"/><path d="M11.5 10.2 L15.4 8.2 V13.1 L11.5 15Z" fill="#b01212"/><path d="M8 8.5 L11.5 10.1" fill="none" stroke="#f59a9a" stroke-width="0.7"/>
<path d="M8.3 0.4 L12.1 2.1 V7.7 L8.3 9.7 L4.5 7.7 V2.1Z" fill="#ffe94e" stroke="#6a6420" stroke-width="0.8" stroke-linejoin="round"/><path d="M8.3 4 L12.1 2.1 V7.7 L8.3 9.7Z" fill="#f9bd48"/><path d="M8.3 0.8 L11.7 2.2 L8.3 3.9 L4.9 2.2Z" fill="#ffff6a"/>
</svg>
<div style="left:24.75px;top:340.2799999999999px;width:8.4px;height:8.2px;border:1px solid #8791b0;border-radius:2px;background:linear-gradient(#e6e9f1,#b4bcd2);box-sizing:border-box;"></div>
<svg style="position:absolute;left:0;top:0" width="1200" height="604" viewBox="0 0 1200 604"><rect x="26.65" y="343.88" width="4.60" height="1.00" fill="#5d688c"/><rect x="28.45" y="342.08" width="1.00" height="4.60" fill="#5d688c"/><rect x="369.80" y="53.00" width="1.10" height="547.00" fill="#eef4fc"/><defs><linearGradient id="spl" x1="0" y1="0" x2="1" y2="0"><stop offset="0" stop-color="#8db1e6"/><stop offset="0.5" stop-color="#6e9cdb"/><stop offset="1" stop-color="#8fb3e6"/></linearGradient></defs><rect x="370.9" y="53" width="3.8" height="547.7" fill="url(#spl)"/><rect x="374.70" y="53.00" width="1.30" height="547.00" fill="#d3e3f8"/><rect x="372.00" y="320.50" width="1.90" height="1.70" fill="#e6eefb"/><rect x="372.00" y="324.17" width="1.90" height="1.70" fill="#e6eefb"/><rect x="372.00" y="327.84" width="1.90" height="1.70" fill="#e6eefb"/><rect x="372.00" y="331.51" width="1.90" height="1.70" fill="#e6eefb"/><rect x="376.40" y="72.30" width="818.40" height="1.00" fill="#a4c0e8"/></svg>
<div style="left:378.6px;top:54px;width:46.69999999999999px;height:19px;background:linear-gradient(#f4f8fd,#e3edfa 60%,#dfeaf9);border:1px solid #a4c0e8;border-bottom:none;border-radius:3px 3px 0 0;box-sizing:border-box;"></div>
<div class="t" style="left:386.7px;top:57.50px;height:14px;line-height:14px;font-size:10px;font-weight:400;color:#27488f;letter-spacing:-0.251px;">Počítač</div>
<div style="left:427px;top:54.4px;width:70px;height:17.8px;background:linear-gradient(#7ba3db 0%,#6b96d4 35%,#4976bf 52%,#4d7dc6 75%,#5989cf 100%);border:1px solid #4a76ba;border-bottom:none;border-radius:3px 3px 0 0;box-sizing:border-box;"></div>
<div class="t" style="left:434px;top:57.50px;height:14px;line-height:14px;font-size:10px;font-weight:400;color:#eaf0fa;letter-spacing:-0.150px;-webkit-text-stroke:0;">Příslušenství</div>
<div style="left:499px;top:54.4px;width:47.200000000000045px;height:17.8px;background:linear-gradient(#7ba3db 0%,#6b96d4 35%,#4976bf 52%,#4d7dc6 75%,#5989cf 100%);border:1px solid #4a76ba;border-bottom:none;border-radius:3px 3px 0 0;box-sizing:border-box;"></div>
<div class="t" style="left:506px;top:57.50px;height:14px;line-height:14px;font-size:10px;font-weight:400;color:#eaf0fa;letter-spacing:-0.310px;-webkit-text-stroke:0;">Licence</div>
<div style="left:548px;top:54.4px;width:55.5px;height:17.8px;background:linear-gradient(#7ba3db 0%,#6b96d4 35%,#4976bf 52%,#4d7dc6 75%,#5989cf 100%);border:1px solid #4a76ba;border-bottom:none;border-radius:3px 3px 0 0;box-sizing:border-box;"></div>
<div class="t" style="left:555px;top:57.50px;height:14px;line-height:14px;font-size:10px;font-weight:400;color:#eaf0fa;letter-spacing:-0.174px;-webkit-text-stroke:0;">Nelegální</div>
<div style="left:605px;top:54.4px;width:63px;height:17.8px;background:linear-gradient(#7ba3db 0%,#6b96d4 35%,#4976bf 52%,#4d7dc6 75%,#5989cf 100%);border:1px solid #4a76ba;border-bottom:none;border-radius:3px 3px 0 0;box-sizing:border-box;"></div>
<div class="t" style="left:612.3px;top:57.50px;height:14px;line-height:14px;font-size:10px;font-weight:400;color:#eaf0fa;letter-spacing:-0.313px;-webkit-text-stroke:0;">Bez licence</div>
<svg style="position:absolute;left:0;top:0" width="1200" height="604" viewBox="0 0 1200 604"><rect x="376.40" y="73.30" width="817.40" height="524.00" fill="#e9f1fd"/><rect x="379.00" y="76.00" width="811.80" height="518.80" fill="#a9c4e9"/><rect x="380.00" y="77.00" width="809.80" height="516.80" fill="#e4eefb"/><rect x="380.90" y="77.80" width="808.00" height="515.40" fill="#a9c0e0"/><rect x="381.70" y="78.50" width="1.00" height="1.00" fill="#a9c0e0"/><defs><linearGradient id="ind" x1="0" y1="0" x2="0" y2="1"><stop offset="0" stop-color="#e9f2fd"/><stop offset="1" stop-color="#d3e3f8"/></linearGradient><linearGradient id="cat" x1="0" y1="0" x2="0" y2="1"><stop offset="0" stop-color="#eef5fe"/><stop offset="0.5" stop-color="#e4effc"/><stop offset="1" stop-color="#d9e8fb"/></linearGradient></defs><rect x="381.70" y="78.20" width="791.50" height="16.20" fill="url(#cat)"/><rect x="381.70" y="77.70" width="791.50" height="1.00" fill="#b4c9e8"/><rect x="381.70" y="93.90" width="791.50" height="1.00" fill="#b4c9e8"/></svg>
<div class="t" style="left:397.6px;top:78.70px;height:14px;line-height:14px;font-size:10.6px;font-weight:700;color:#1f4a94;letter-spacing:-0.033px;">Hlavní</div>
<svg style="position:absolute;left:1155.1px;top:82.30000000000001px" width="7" height="8" viewBox="0 0 7 8"><path d="M0.5 3.6 L3.5 0.8 L6.5 3.6 M0.5 7.2 L3.5 4.4 L6.5 7.2" fill="none" stroke="#5578b6" stroke-width="1.05"/></svg>
<svg style="position:absolute;left:0;top:0" width="1200" height="604" viewBox="0 0 1200 604"><rect x="381.70" y="94.40" width="11.70" height="15.99" fill="url(#ind)"/><rect x="393.40" y="94.40" width="386.30" height="15.99" fill="#e7edf8"/><rect x="779.70" y="94.40" width="393.50" height="15.99" fill="#ffffff"/><rect x="393.40" y="109.59" width="779.80" height="1.00" fill="#c6d6ee"/><rect x="392.90" y="94.40" width="1.00" height="15.69" fill="#c6d6ee"/><rect x="779.20" y="94.40" width="1.00" height="15.69" fill="#c6d6ee"/></svg>
<div class="t" style="left:407.6px;top:96.44px;height:14px;line-height:14px;font-size:10px;font-weight:400;color:#111;letter-spacing:-0.427px;">Název PC</div>
<div class="t" style="left:783.4px;top:96.44px;height:14px;line-height:14px;font-size:10px;font-weight:400;color:#111;letter-spacing:-0.373px;">OBCHOD-14</div>
<svg style="position:absolute;left:0;top:0" width="1200" height="604" viewBox="0 0 1200 604"><rect x="381.70" y="110.09" width="11.70" height="15.99" fill="url(#ind)"/><rect x="393.40" y="110.09" width="386.30" height="15.99" fill="#e7edf8"/><rect x="779.70" y="110.09" width="393.50" height="15.99" fill="#ffffff"/><rect x="393.40" y="125.28" width="779.80" height="1.00" fill="#c6d6ee"/><rect x="392.90" y="110.09" width="1.00" height="15.69" fill="#c6d6ee"/><rect x="779.20" y="110.09" width="1.00" height="15.69" fill="#c6d6ee"/></svg>
<div class="t" style="left:407.6px;top:112.13px;height:14px;line-height:14px;font-size:10px;font-weight:400;color:#111;letter-spacing:-0.114px;">IP adresa</div>
<div class="t" style="left:783.4px;top:112.13px;height:14px;line-height:14px;font-size:10px;font-weight:400;color:#111;letter-spacing:0.096px;">192.168.10.23</div>
<svg style="position:absolute;left:0;top:0" width="1200" height="604" viewBox="0 0 1200 604"><rect x="381.70" y="125.78" width="11.70" height="15.99" fill="url(#ind)"/><rect x="393.40" y="125.78" width="386.30" height="15.99" fill="#e7edf8"/><rect x="779.70" y="125.78" width="393.50" height="15.99" fill="#ffffff"/><rect x="393.40" y="140.97" width="779.80" height="1.00" fill="#c6d6ee"/><rect x="392.90" y="125.78" width="1.00" height="15.69" fill="#c6d6ee"/><rect x="779.20" y="125.78" width="1.00" height="15.69" fill="#c6d6ee"/></svg>
<div class="t" style="left:407.6px;top:127.82px;height:14px;line-height:14px;font-size:10px;font-weight:400;color:#111;letter-spacing:-0.190px;">Typ komunikace</div>
<div class="t" style="left:783.4px;top:127.82px;height:14px;line-height:14px;font-size:10px;font-weight:400;color:#111;letter-spacing:-0.103px;">Název počítače</div>
<svg style="position:absolute;left:0;top:0" width="1200" height="604" viewBox="0 0 1200 604"><rect x="381.70" y="141.47" width="11.70" height="15.99" fill="url(#ind)"/><rect x="393.40" y="141.47" width="386.30" height="15.99" fill="#e7edf8"/><rect x="779.70" y="141.47" width="393.50" height="15.99" fill="#ffffff"/><rect x="393.40" y="156.66" width="779.80" height="1.00" fill="#c6d6ee"/><rect x="392.90" y="141.47" width="1.00" height="15.69" fill="#c6d6ee"/><rect x="779.20" y="141.47" width="1.00" height="15.69" fill="#c6d6ee"/></svg>
<div class="t" style="left:407.6px;top:143.51px;height:14px;line-height:14px;font-size:10px;font-weight:400;color:#111;letter-spacing:-0.176px;">Typ hlavního OS</div>
<div class="t" style="left:783.4px;top:143.51px;height:14px;line-height:14px;font-size:10px;font-weight:400;color:#111;letter-spacing:-0.140px;">Windows</div>
<svg style="position:absolute;left:0;top:0" width="1200" height="604" viewBox="0 0 1200 604"><rect x="381.70" y="157.16" width="11.70" height="15.99" fill="url(#ind)"/><rect x="393.40" y="157.16" width="386.30" height="15.99" fill="#e7edf8"/><rect x="779.70" y="157.16" width="393.50" height="15.99" fill="#ffffff"/><rect x="393.40" y="172.34" width="779.80" height="1.00" fill="#c6d6ee"/><rect x="392.90" y="157.16" width="1.00" height="15.69" fill="#c6d6ee"/><rect x="779.20" y="157.16" width="1.00" height="15.69" fill="#c6d6ee"/></svg>
<div class="t" style="left:407.6px;top:159.20px;height:14px;line-height:14px;font-size:10px;font-weight:400;color:#111;letter-spacing:-0.236px;">Popis počítače</div>
<svg style="position:absolute;left:0;top:0" width="1200" height="604" viewBox="0 0 1200 604"><rect x="381.70" y="172.84" width="11.70" height="15.99" fill="url(#ind)"/><rect x="393.40" y="172.84" width="386.30" height="15.99" fill="#e7edf8"/><rect x="779.70" y="172.84" width="393.50" height="15.99" fill="#ffffff"/><rect x="393.40" y="188.03" width="779.80" height="1.00" fill="#c6d6ee"/><rect x="392.90" y="172.84" width="1.00" height="15.69" fill="#c6d6ee"/><rect x="779.20" y="172.84" width="1.00" height="15.69" fill="#c6d6ee"/></svg>
<div class="t" style="left:407.6px;top:174.89px;height:14px;line-height:14px;font-size:10px;font-weight:400;color:#111;letter-spacing:-0.040px;">Org. členění</div>
<div class="t" style="left:783.4px;top:174.89px;height:14px;line-height:14px;font-size:10px;font-weight:400;color:#111;letter-spacing:-0.254px;">MiCoS SOFTWARE s.r.o.</div>
<svg style="position:absolute;left:0;top:0" width="1200" height="604" viewBox="0 0 1200 604"><rect x="381.70" y="188.53" width="11.70" height="15.99" fill="url(#ind)"/><rect x="393.40" y="188.53" width="386.30" height="15.99" fill="#e7edf8"/><rect x="779.70" y="188.53" width="393.50" height="15.99" fill="#ffffff"/><rect x="393.40" y="203.72" width="779.80" height="1.00" fill="#c6d6ee"/><rect x="392.90" y="188.53" width="1.00" height="15.69" fill="#c6d6ee"/><rect x="779.20" y="188.53" width="1.00" height="15.69" fill="#c6d6ee"/></svg>
<div class="t" style="left:407.6px;top:190.58px;height:14px;line-height:14px;font-size:10px;font-weight:400;color:#111;letter-spacing:-0.439px;">Pracoviště</div>
<svg style="position:absolute;left:0;top:0" width="1200" height="604" viewBox="0 0 1200 604"><rect x="381.70" y="204.22" width="11.70" height="15.99" fill="url(#ind)"/><rect x="393.40" y="204.22" width="386.30" height="15.99" fill="#e7edf8"/><rect x="779.70" y="204.22" width="393.50" height="15.99" fill="#ffffff"/><rect x="393.40" y="219.41" width="779.80" height="1.00" fill="#c6d6ee"/><rect x="392.90" y="204.22" width="1.00" height="15.69" fill="#c6d6ee"/><rect x="779.20" y="204.22" width="1.00" height="15.69" fill="#c6d6ee"/></svg>
<div class="t" style="left:407.6px;top:206.27px;height:14px;line-height:14px;font-size:10px;font-weight:400;color:#111;letter-spacing:-0.108px;">Nákladové středisko</div>
<svg style="position:absolute;left:0;top:0" width="1200" height="604" viewBox="0 0 1200 604"><rect x="381.70" y="219.91" width="11.70" height="15.99" fill="url(#ind)"/><rect x="393.40" y="219.91" width="386.30" height="15.99" fill="#e7edf8"/><rect x="779.70" y="219.91" width="393.50" height="15.99" fill="#ffffff"/><rect x="393.40" y="235.10" width="779.80" height="1.00" fill="#c6d6ee"/><rect x="392.90" y="219.91" width="1.00" height="15.69" fill="#c6d6ee"/><rect x="779.20" y="219.91" width="1.00" height="15.69" fill="#c6d6ee"/></svg>
<div class="t" style="left:407.6px;top:221.96px;height:14px;line-height:14px;font-size:10px;font-weight:400;color:#111;letter-spacing:-0.032px;">Odp. osoba</div>
<svg style="position:absolute;left:0;top:0" width="1200" height="604" viewBox="0 0 1200 604"><rect x="381.70" y="235.60" width="11.70" height="15.99" fill="url(#ind)"/><rect x="393.40" y="235.60" width="386.30" height="15.99" fill="#e7edf8"/><rect x="779.70" y="235.60" width="393.50" height="15.99" fill="#ffffff"/><rect x="393.40" y="250.79" width="779.80" height="1.00" fill="#c6d6ee"/><rect x="392.90" y="235.60" width="1.00" height="15.69" fill="#c6d6ee"/><rect x="779.20" y="235.60" width="1.00" height="15.69" fill="#c6d6ee"/></svg>
<div class="t" style="left:407.6px;top:237.64px;height:14px;line-height:14px;font-size:10px;font-weight:400;color:#111;letter-spacing:-0.368px;">Síť</div>
<svg style="position:absolute;left:0;top:0" width="1200" height="604" viewBox="0 0 1200 604"><rect x="381.70" y="251.29" width="11.70" height="15.99" fill="url(#ind)"/><rect x="393.40" y="251.29" width="386.30" height="15.99" fill="#e7edf8"/><rect x="779.70" y="251.29" width="393.50" height="15.99" fill="#ffffff"/><rect x="393.40" y="266.48" width="779.80" height="1.00" fill="#c6d6ee"/><rect x="392.90" y="251.29" width="1.00" height="15.69" fill="#c6d6ee"/><rect x="779.20" y="251.29" width="1.00" height="15.69" fill="#c6d6ee"/></svg>
<div class="t" style="left:407.6px;top:253.33px;height:14px;line-height:14px;font-size:10px;font-weight:400;color:#111;letter-spacing:-0.242px;">Zásuvka</div>
<div class="t" style="left:783.4px;top:253.33px;height:14px;line-height:14px;font-size:10px;font-weight:400;color:#111;letter-spacing:0.068px;">A03</div>
<svg style="position:absolute;left:0;top:0" width="1200" height="604" viewBox="0 0 1200 604"><rect x="381.70" y="266.98" width="11.70" height="15.99" fill="url(#ind)"/><rect x="393.40" y="266.98" width="386.30" height="15.99" fill="#e7edf8"/><rect x="779.70" y="266.98" width="393.50" height="15.99" fill="#ffffff"/><rect x="393.40" y="282.17" width="779.80" height="1.00" fill="#c6d6ee"/><rect x="392.90" y="266.98" width="1.00" height="15.69" fill="#c6d6ee"/><rect x="779.20" y="266.98" width="1.00" height="15.69" fill="#c6d6ee"/></svg>
<div class="t" style="left:407.6px;top:269.02px;height:14px;line-height:14px;font-size:10px;font-weight:400;color:#111;letter-spacing:-0.338px;">Evidenční číslo</div>
<svg style="position:absolute;left:0;top:0" width="1200" height="604" viewBox="0 0 1200 604"><rect x="381.70" y="282.67" width="11.70" height="15.99" fill="url(#ind)"/><rect x="393.40" y="282.67" width="386.30" height="15.99" fill="#e7edf8"/><rect x="779.70" y="282.67" width="393.50" height="15.99" fill="#ffffff"/><rect x="393.40" y="297.86" width="779.80" height="1.00" fill="#c6d6ee"/><rect x="392.90" y="282.67" width="1.00" height="15.69" fill="#c6d6ee"/><rect x="779.20" y="282.67" width="1.00" height="15.69" fill="#c6d6ee"/></svg>
<div class="t" style="left:407.6px;top:284.71px;height:14px;line-height:14px;font-size:10px;font-weight:400;color:#111;letter-spacing:-0.278px;">Výrobní číslo</div>
<div class="t" style="left:783.4px;top:284.71px;height:14px;line-height:14px;font-size:10px;font-weight:400;color:#111;letter-spacing:-0.168px;">D7N0CV403132286</div>
<svg style="position:absolute;left:0;top:0" width="1200" height="604" viewBox="0 0 1200 604"><rect x="381.70" y="298.36" width="11.70" height="15.99" fill="url(#ind)"/><rect x="393.40" y="298.36" width="386.30" height="15.99" fill="#e7edf8"/><rect x="779.70" y="298.36" width="393.50" height="15.99" fill="#ffffff"/><rect x="393.40" y="313.54" width="779.80" height="1.00" fill="#c6d6ee"/><rect x="392.90" y="298.36" width="1.00" height="15.69" fill="#c6d6ee"/><rect x="779.20" y="298.36" width="1.00" height="15.69" fill="#c6d6ee"/></svg>
<div class="t" style="left:407.6px;top:300.40px;height:14px;line-height:14px;font-size:10px;font-weight:400;color:#111;letter-spacing:-0.070px;">Inventární číslo</div>
<div class="t" style="left:783.4px;top:300.40px;height:14px;line-height:14px;font-size:10px;font-weight:400;color:#111;letter-spacing:0.096px;">IČ 258745858</div>
<svg style="position:absolute;left:0;top:0" width="1200" height="604" viewBox="0 0 1200 604"><rect x="381.70" y="314.04" width="11.70" height="15.99" fill="url(#ind)"/><rect x="393.40" y="314.04" width="386.30" height="15.99" fill="#e7edf8"/><rect x="779.70" y="314.04" width="393.50" height="15.99" fill="#ffffff"/><rect x="393.40" y="329.23" width="779.80" height="1.00" fill="#c6d6ee"/><rect x="392.90" y="314.04" width="1.00" height="15.69" fill="#c6d6ee"/><rect x="779.20" y="314.04" width="1.00" height="15.69" fill="#c6d6ee"/></svg>
<div class="t" style="left:407.6px;top:316.09px;height:14px;line-height:14px;font-size:10px;font-weight:400;color:#111;letter-spacing:-0.289px;">Specifické číslo</div>
<svg style="position:absolute;left:0;top:0" width="1200" height="604" viewBox="0 0 1200 604"><rect x="381.70" y="329.73" width="11.70" height="15.99" fill="url(#ind)"/><rect x="393.40" y="329.73" width="386.30" height="15.99" fill="#e7edf8"/><rect x="779.70" y="329.73" width="393.50" height="15.99" fill="#ffffff"/><rect x="393.40" y="344.92" width="779.80" height="1.00" fill="#c6d6ee"/><rect x="392.90" y="329.73" width="1.00" height="15.69" fill="#c6d6ee"/><rect x="779.20" y="329.73" width="1.00" height="15.69" fill="#c6d6ee"/></svg>
<div class="t" style="left:407.6px;top:331.78px;height:14px;line-height:14px;font-size:10px;font-weight:400;color:#111;letter-spacing:-0.316px;">Značka</div>
<svg style="position:absolute;left:0;top:0" width="1200" height="604" viewBox="0 0 1200 604"><rect x="381.70" y="345.42" width="11.70" height="15.99" fill="url(#ind)"/><rect x="393.40" y="345.42" width="386.30" height="15.99" fill="#e7edf8"/><rect x="779.70" y="345.42" width="393.50" height="15.99" fill="#ffffff"/><rect x="393.40" y="360.61" width="779.80" height="1.00" fill="#c6d6ee"/><rect x="392.90" y="345.42" width="1.00" height="15.69" fill="#c6d6ee"/><rect x="779.20" y="345.42" width="1.00" height="15.69" fill="#c6d6ee"/></svg>
<div class="t" style="left:407.6px;top:347.47px;height:14px;line-height:14px;font-size:10px;font-weight:400;color:#111;letter-spacing:-0.159px;">Obchodní název</div>
<svg style="position:absolute;left:0;top:0" width="1200" height="604" viewBox="0 0 1200 604"><rect x="381.70" y="361.11" width="11.70" height="15.99" fill="url(#ind)"/><rect x="393.40" y="361.11" width="386.30" height="15.99" fill="#e7edf8"/><rect x="779.70" y="361.11" width="393.50" height="15.99" fill="#ffffff"/><rect x="393.40" y="376.30" width="779.80" height="1.00" fill="#c6d6ee"/><rect x="392.90" y="361.11" width="1.00" height="15.69" fill="#c6d6ee"/><rect x="779.20" y="361.11" width="1.00" height="15.69" fill="#c6d6ee"/></svg>
<div class="t" style="left:407.6px;top:363.16px;height:14px;line-height:14px;font-size:10px;font-weight:400;color:#111;letter-spacing:-0.254px;">Použití</div>
<svg style="position:absolute;left:0;top:0" width="1200" height="604" viewBox="0 0 1200 604"><rect x="381.70" y="377.00" width="791.50" height="19.30" fill="url(#cat)"/><rect x="381.70" y="376.50" width="791.50" height="1.00" fill="#b4c9e8"/><rect x="381.70" y="395.80" width="791.50" height="1.00" fill="#b4c9e8"/></svg>
<div class="t" style="left:397.6px;top:380.35px;height:14px;line-height:14px;font-size:10.6px;font-weight:700;color:#1f4a94;letter-spacing:0.300px;">Technické parametry</div>
<svg style="position:absolute;left:1155.1px;top:382.65px" width="7" height="8" viewBox="0 0 7 8"><path d="M0.5 3.6 L3.5 0.8 L6.5 3.6 M0.5 7.2 L3.5 4.4 L6.5 7.2" fill="none" stroke="#5578b6" stroke-width="1.05"/></svg>
<svg style="position:absolute;left:0;top:0" width="1200" height="604" viewBox="0 0 1200 604"><rect x="381.70" y="396.30" width="11.70" height="16.40" fill="url(#ind)"/><rect x="393.40" y="396.30" width="386.30" height="16.40" fill="#e7edf8"/><rect x="779.70" y="396.30" width="393.50" height="16.40" fill="#ffffff"/><rect x="393.40" y="411.90" width="779.80" height="1.00" fill="#c6d6ee"/><rect x="392.90" y="396.30" width="1.00" height="16.10" fill="#c6d6ee"/><rect x="779.20" y="396.30" width="1.00" height="16.10" fill="#c6d6ee"/></svg>
<div class="t" style="left:407.6px;top:398.55px;height:14px;line-height:14px;font-size:10px;font-weight:400;color:#111;letter-spacing:-0.146px;">Operační systém</div>
<div class="t" style="left:783.4px;top:398.55px;height:14px;line-height:14px;font-size:10px;font-weight:400;color:#111;letter-spacing:-0.082px;">MS Windows 8.1 Professional x64</div>
<svg style="position:absolute;left:0;top:0" width="1200" height="604" viewBox="0 0 1200 604"><rect x="381.70" y="412.40" width="11.70" height="16.10" fill="url(#ind)"/><rect x="393.40" y="412.40" width="386.30" height="16.10" fill="#e7edf8"/><rect x="779.70" y="412.40" width="393.50" height="16.10" fill="#ffffff"/><rect x="393.40" y="427.70" width="779.80" height="1.00" fill="#c6d6ee"/><rect x="392.90" y="412.40" width="1.00" height="15.80" fill="#c6d6ee"/><rect x="779.20" y="412.40" width="1.00" height="15.80" fill="#c6d6ee"/></svg>
<div class="t" style="left:407.6px;top:414.50px;height:14px;line-height:14px;font-size:10px;font-weight:400;color:#111;letter-spacing:-0.266px;">Service pack OS</div>
<svg style="position:absolute;left:0;top:0" width="1200" height="604" viewBox="0 0 1200 604"><rect x="381.70" y="428.20" width="11.70" height="18.20" fill="url(#ind)"/><rect x="393.40" y="428.20" width="386.30" height="18.20" fill="#e7edf8"/><rect x="779.70" y="428.20" width="393.50" height="18.20" fill="#ffffff"/><rect x="393.40" y="445.60" width="779.80" height="1.00" fill="#c6d6ee"/><rect x="392.90" y="428.20" width="1.00" height="17.90" fill="#c6d6ee"/><rect x="779.20" y="428.20" width="1.00" height="17.90" fill="#c6d6ee"/></svg>
<div class="t" style="left:407.6px;top:431.35px;height:14px;line-height:14px;font-size:10px;font-weight:400;color:#111;letter-spacing:-0.197px;">Datum instalace OS</div>
<div class="t" style="left:783.4px;top:431.35px;height:14px;line-height:14px;font-size:10px;font-weight:400;color:#111;letter-spacing:0.233px;">6.12.2013</div>
<svg style="position:absolute;left:0;top:0" width="1200" height="604" viewBox="0 0 1200 604"><rect x="381.70" y="446.10" width="11.70" height="16.04" fill="url(#ind)"/><rect x="393.40" y="446.10" width="386.30" height="16.04" fill="#e7edf8"/><rect x="779.70" y="446.10" width="393.50" height="16.04" fill="#ffffff"/><rect x="393.40" y="461.34" width="779.80" height="1.00" fill="#c6d6ee"/><rect x="392.90" y="446.10" width="1.00" height="15.74" fill="#c6d6ee"/><rect x="779.20" y="446.10" width="1.00" height="15.74" fill="#c6d6ee"/></svg>
<div class="t" style="left:407.6px;top:448.17px;height:14px;line-height:14px;font-size:10px;font-weight:400;color:#111;letter-spacing:-0.238px;">MAC adresa</div>
<div class="t" style="left:783.4px;top:448.17px;height:14px;line-height:14px;font-size:10px;font-weight:400;color:#111;letter-spacing:-0.294px;">AC220B14F01C</div>
<svg style="position:absolute;left:0;top:0" width="1200" height="604" viewBox="0 0 1200 604"><rect x="381.70" y="461.84" width="11.70" height="16.04" fill="url(#ind)"/><rect x="393.40" y="461.84" width="386.30" height="16.04" fill="#e7edf8"/><rect x="779.70" y="461.84" width="393.50" height="16.04" fill="#ffffff"/><rect x="393.40" y="477.08" width="779.80" height="1.00" fill="#c6d6ee"/><rect x="392.90" y="461.84" width="1.00" height="15.74" fill="#c6d6ee"/><rect x="779.20" y="461.84" width="1.00" height="15.74" fill="#c6d6ee"/></svg>
<div class="t" style="left:407.6px;top:463.91px;height:14px;line-height:14px;font-size:10px;font-weight:400;color:#111;letter-spacing:-0.350px;">Model</div>
<div class="t" style="left:783.4px;top:463.91px;height:14px;line-height:14px;font-size:10px;font-weight:400;color:#111;letter-spacing:-0.408px;">S300CA</div>
<svg style="position:absolute;left:0;top:0" width="1200" height="604" viewBox="0 0 1200 604"><rect x="381.70" y="477.58" width="11.70" height="16.04" fill="url(#ind)"/><rect x="393.40" y="477.58" width="386.30" height="16.04" fill="#e7edf8"/><rect x="779.70" y="477.58" width="393.50" height="16.04" fill="#ffffff"/><rect x="393.40" y="492.82" width="779.80" height="1.00" fill="#c6d6ee"/><rect x="392.90" y="477.58" width="1.00" height="15.74" fill="#c6d6ee"/><rect x="779.20" y="477.58" width="1.00" height="15.74" fill="#c6d6ee"/></svg>
<div class="t" style="left:407.6px;top:479.65px;height:14px;line-height:14px;font-size:10px;font-weight:400;color:#111;letter-spacing:-0.170px;">Výrobce</div>
<div class="t" style="left:783.4px;top:479.65px;height:14px;line-height:14px;font-size:10px;font-weight:400;color:#111;letter-spacing:-0.507px;">ASUSTeK COMPUTER INC.</div>
<svg style="position:absolute;left:0;top:0" width="1200" height="604" viewBox="0 0 1200 604"><rect x="381.70" y="493.32" width="11.70" height="16.04" fill="url(#ind)"/><rect x="393.40" y="493.32" width="386.30" height="16.04" fill="#e7edf8"/><rect x="779.70" y="493.32" width="393.50" height="16.04" fill="#ffffff"/><rect x="393.40" y="508.56" width="779.80" height="1.00" fill="#c6d6ee"/><rect x="392.90" y="493.32" width="1.00" height="15.74" fill="#c6d6ee"/><rect x="779.20" y="493.32" width="1.00" height="15.74" fill="#c6d6ee"/></svg>
<div class="t" style="left:407.6px;top:495.39px;height:14px;line-height:14px;font-size:10px;font-weight:400;color:#111;letter-spacing:-0.059px;">Typ počítače</div>
<div class="t" style="left:783.4px;top:495.39px;height:14px;line-height:14px;font-size:10px;font-weight:400;color:#111;letter-spacing:0.011px;">Notebook</div>
<svg style="position:absolute;left:0;top:0" width="1200" height="604" viewBox="0 0 1200 604"><rect x="381.70" y="509.06" width="11.70" height="16.04" fill="url(#ind)"/><rect x="393.40" y="509.06" width="386.30" height="16.04" fill="#e7edf8"/><rect x="779.70" y="509.06" width="393.50" height="16.04" fill="#ffffff"/><rect x="393.40" y="524.30" width="779.80" height="1.00" fill="#c6d6ee"/><rect x="392.90" y="509.06" width="1.00" height="15.74" fill="#c6d6ee"/><rect x="779.20" y="509.06" width="1.00" height="15.74" fill="#c6d6ee"/></svg>
<div class="t" style="left:407.6px;top:511.13px;height:14px;line-height:14px;font-size:10px;font-weight:400;color:#111;letter-spacing:-0.264px;">Procesor</div>
<div class="t" style="left:783.4px;top:511.13px;height:14px;line-height:14px;font-size:10px;font-weight:400;color:#111;letter-spacing:-0.035px;">Intel Core i3-2365  1 400 MHz</div>
<svg style="position:absolute;left:0;top:0" width="1200" height="604" viewBox="0 0 1200 604"><rect x="381.70" y="524.80" width="11.70" height="16.04" fill="url(#ind)"/><rect x="393.40" y="524.80" width="386.30" height="16.04" fill="#e7edf8"/><rect x="779.70" y="524.80" width="393.50" height="16.04" fill="#ffffff"/><rect x="393.40" y="540.04" width="779.80" height="1.00" fill="#c6d6ee"/><rect x="392.90" y="524.80" width="1.00" height="15.74" fill="#c6d6ee"/><rect x="779.20" y="524.80" width="1.00" height="15.74" fill="#c6d6ee"/></svg>
<div class="t" style="left:407.6px;top:526.87px;height:14px;line-height:14px;font-size:10px;font-weight:400;color:#111;letter-spacing:-0.082px;">Počet procesorů</div>
<div class="t" style="left:783.4px;top:526.87px;height:14px;line-height:14px;font-size:10px;font-weight:400;color:#111;">1</div>
<svg style="position:absolute;left:0;top:0" width="1200" height="604" viewBox="0 0 1200 604"><rect x="381.70" y="540.54" width="11.70" height="16.04" fill="url(#ind)"/><rect x="393.40" y="540.54" width="386.30" height="16.04" fill="#e7edf8"/><rect x="779.70" y="540.54" width="393.50" height="16.04" fill="#ffffff"/><rect x="393.40" y="555.78" width="779.80" height="1.00" fill="#c6d6ee"/><rect x="392.90" y="540.54" width="1.00" height="15.74" fill="#c6d6ee"/><rect x="779.20" y="540.54" width="1.00" height="15.74" fill="#c6d6ee"/></svg>
<div class="t" style="left:407.6px;top:542.61px;height:14px;line-height:14px;font-size:10px;font-weight:400;color:#111;letter-spacing:-0.103px;">Jádra</div>
<div class="t" style="left:783.4px;top:542.61px;height:14px;line-height:14px;font-size:10px;font-weight:400;color:#111;">2</div>
<svg style="position:absolute;left:0;top:0" width="1200" height="604" viewBox="0 0 1200 604"><rect x="381.70" y="556.28" width="11.70" height="16.04" fill="url(#ind)"/><rect x="393.40" y="556.28" width="386.30" height="16.04" fill="#e7edf8"/><rect x="779.70" y="556.28" width="393.50" height="16.04" fill="#ffffff"/><rect x="393.40" y="571.52" width="779.80" height="1.00" fill="#c6d6ee"/><rect x="392.90" y="556.28" width="1.00" height="15.74" fill="#c6d6ee"/><rect x="779.20" y="556.28" width="1.00" height="15.74" fill="#c6d6ee"/></svg>
<div class="t" style="left:407.6px;top:558.35px;height:14px;line-height:14px;font-size:10px;font-weight:400;color:#111;letter-spacing:-0.430px;">Vlákna</div>
<div class="t" style="left:783.4px;top:558.35px;height:14px;line-height:14px;font-size:10px;font-weight:400;color:#111;">4</div>
<svg style="position:absolute;left:0;top:0" width="1200" height="604" viewBox="0 0 1200 604"><rect x="381.70" y="572.02" width="11.70" height="16.04" fill="url(#ind)"/><rect x="393.40" y="572.02" width="386.30" height="16.04" fill="#e7edf8"/><rect x="779.70" y="572.02" width="393.50" height="16.04" fill="#ffffff"/><rect x="393.40" y="587.26" width="779.80" height="1.00" fill="#c6d6ee"/><rect x="392.90" y="572.02" width="1.00" height="15.74" fill="#c6d6ee"/><rect x="779.20" y="572.02" width="1.00" height="15.74" fill="#c6d6ee"/></svg>
<div class="t" style="left:407.6px;top:574.09px;height:14px;line-height:14px;font-size:10px;font-weight:400;color:#111;letter-spacing:-0.385px;">Doména</div>
<div class="t" style="left:783.4px;top:574.09px;height:14px;line-height:14px;font-size:10px;font-weight:400;color:#111;letter-spacing:-0.197px;">micos.local</div>
<svg style="position:absolute;left:0;top:0" width="1200" height="604" viewBox="0 0 1200 604"><rect x="381.70" y="587.76" width="11.70" height="16.04" fill="url(#ind)"/><rect x="393.40" y="587.76" width="386.30" height="16.04" fill="#e7edf8"/><rect x="779.70" y="587.76" width="393.50" height="16.04" fill="#ffffff"/><rect x="393.40" y="603.00" width="779.80" height="1.00" fill="#c6d6ee"/><rect x="392.90" y="587.76" width="1.00" height="15.74" fill="#c6d6ee"/><rect x="779.20" y="587.76" width="1.00" height="15.74" fill="#c6d6ee"/></svg>
<div class="t" style="left:407.6px;top:589.83px;height:14px;line-height:14px;font-size:10px;font-weight:400;color:#111;">Role v doméně</div>
<div class="t" style="left:783.4px;top:589.83px;height:14px;line-height:14px;font-size:10px;font-weight:400;color:#111;">Member workstation</div>
<svg style="position:absolute;left:0;top:0" width="1200" height="604" viewBox="0 0 1200 604"><rect x="380.00" y="593.50" width="810.80" height="7.00" fill="#e9f1fd"/><rect x="376.40" y="594.90" width="817.40" height="5.60" fill="#e9f1fd"/><rect x="380.90" y="592.60" width="809.90" height="0.90" fill="#a9c0e0"/><rect x="379.00" y="593.90" width="811.80" height="1.00" fill="#a9c4e9"/><rect x="376.40" y="597.20" width="818.40" height="1.00" fill="#b9d0ef"/><rect x="375.90" y="598.80" width="820.00" height="1.00" fill="#d3e3f8"/></svg>
<div style="left:1173.3px;top:78.3px;width:15.5px;height:514.4px;background:#6792d0;border-left:1px solid #4f7cc0;border-right:1px solid #4f7cc0;box-sizing:border-box;"></div>
<div style="left:1173.3px;top:78.3px;width:15.5px;height:15.2px;background:linear-gradient(#5f8dd0,#5182c8);border:1px solid #3f6cb0;box-sizing:border-box;"></div>
<svg style="position:absolute;left:1176.8999999999999px;top:82.4px" width="8.4" height="4.4" viewBox="0 0 8.4 4.6"><path d="M0 4.6h8.4L4.2 0z" fill="#c9d9f0"/></svg>
<div style="left:1173.3px;top:93.8px;width:15.5px;height:225.2px;background:linear-gradient(90deg,#eef2f8 0%,#dfe6f1 35%,#c3cfe2 60%,#cfd9e9 100%);border:1px solid #5f86c4;box-sizing:border-box;border-radius:1px;"></div>
<svg style="position:absolute;left:0;top:0" width="1200" height="604" viewBox="0 0 1200 604"><rect x="1177.50" y="202.40" width="7.20" height="0.85" fill="#7890ba"/><rect x="1177.50" y="204.25" width="7.20" height="0.85" fill="#7890ba"/><rect x="1177.50" y="206.10" width="7.20" height="0.85" fill="#7890ba"/><rect x="1177.50" y="207.95" width="7.20" height="0.85" fill="#7890ba"/></svg>
<svg style="position:absolute;left:1176.8999999999999px;top:584px" width="8.4" height="4.6" viewBox="0 0 8.4 4.6"><path d="M0 0h8.4L4.2 4.6z" fill="#c9d9f0"/></svg>
<svg style="position:absolute;left:0;top:0" width="1200" height="604" viewBox="0 0 1200 604"><rect x="1189.80" y="76.30" width="1.00" height="518.00" fill="#a4bcdc"/><rect x="1192.60" y="73.30" width="1.20" height="524.00" fill="#f4f8fe"/><rect x="1193.80" y="72.80" width="1.00" height="525.00" fill="#a9c4e9"/><rect x="0.00" y="0.00" width="1.00" height="604.00" fill="#3f70b8"/><rect x="1.00" y="1.00" width="1.30" height="602.00" fill="#9dbfec"/><rect x="2.30" y="27.00" width="0.90" height="575.00" fill="#cfe0f6"/><rect x="1199.00" y="0.00" width="1.00" height="604.00" fill="#3f70b8"/><rect x="1196.90" y="27.00" width="1.00" height="575.00" fill="#8fb2e4"/><rect x="1197.90" y="1.00" width="1.10" height="602.00" fill="#b9d2f2"/><rect x="0.00" y="602.70" width="1200.00" height="1.30" fill="#3f70b8"/><rect x="1.00" y="601.40" width="1198.00" height="1.30" fill="#8fb5e8"/><rect x="2.00" y="600.40" width="1196.00" height="1.00" fill="#c6dbf5"/><rect x="0.00" y="0.00" width="1200.00" height="1.10" fill="#3f70b8"/></svg>
</body></html>
